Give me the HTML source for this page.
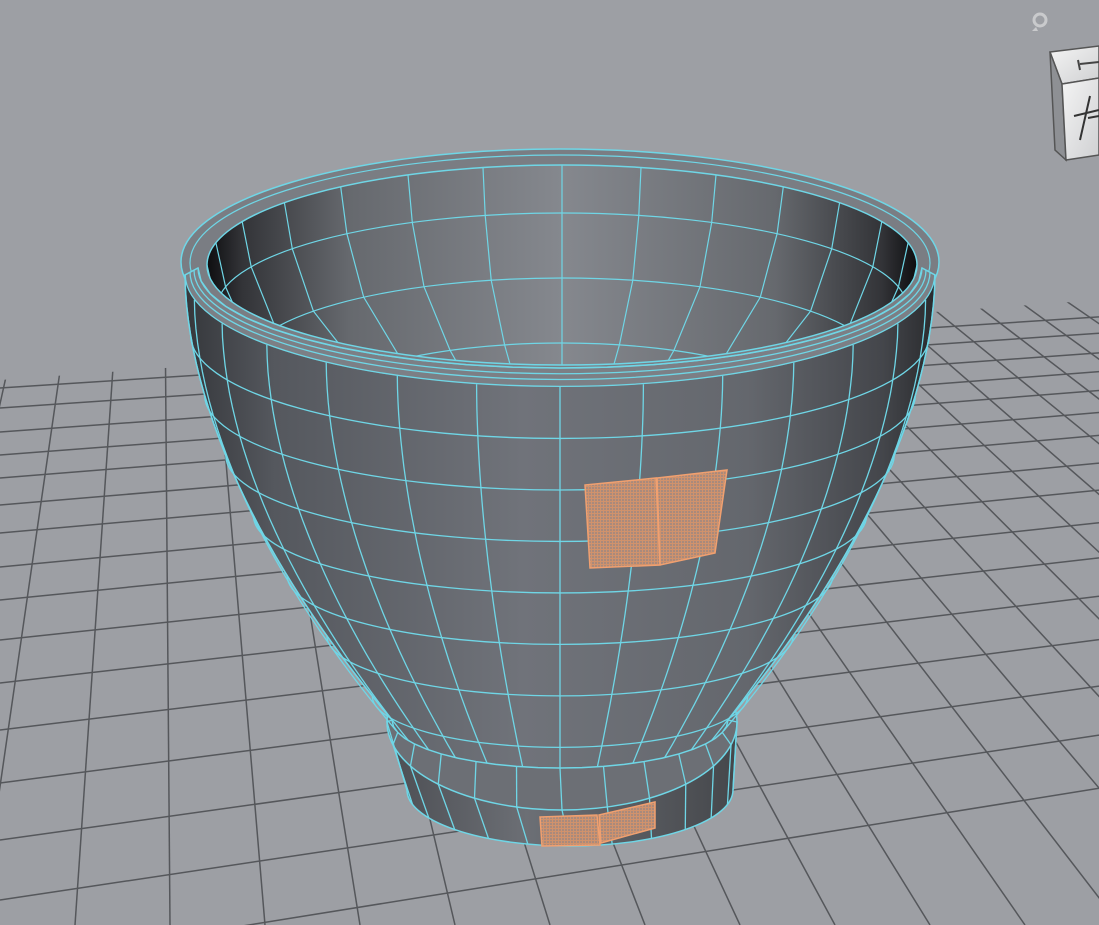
<!DOCTYPE html>
<html><head><meta charset="utf-8"><style>
html,body{margin:0;padding:0;background:#9d9fa4;overflow:hidden}
svg{display:block}
</style></head><body>
<svg id="s" width="1099" height="925" viewBox="0 0 1099 925" xmlns="http://www.w3.org/2000/svg">
<defs>
<linearGradient id="body" x1="0" x2="1" y1="0" y2="0">
<stop offset="0" stop-color="#35373b"/><stop offset="0.12" stop-color="#55585e"/>
<stop offset="0.45" stop-color="#70737a"/><stop offset="0.75" stop-color="#64676d"/>
<stop offset="0.93" stop-color="#44464b"/><stop offset="1" stop-color="#2a2b2e"/>
</linearGradient>
<linearGradient id="cav" x1="0" x2="1" y1="0" y2="0">
<stop offset="0" stop-color="#0e0e10"/><stop offset="0.05" stop-color="#333438"/>
<stop offset="0.2" stop-color="#66696e"/><stop offset="0.5" stop-color="#85888e"/>
<stop offset="0.8" stop-color="#66696e"/><stop offset="0.95" stop-color="#333438"/><stop offset="1" stop-color="#0e0e10"/>
</linearGradient>
<linearGradient id="foot" x1="0" x2="1">
<stop offset="0" stop-color="#4c4e53"/><stop offset="0.4" stop-color="#6c6f75"/><stop offset="1" stop-color="#45474b"/>
</linearGradient>
<linearGradient id="cube" x1="0" x2="1" y1="0" y2="1">
<stop offset="0" stop-color="#f4f4f4"/><stop offset="1" stop-color="#cfd0d2"/>
</linearGradient>
<pattern id="dots" width="3" height="3" patternUnits="userSpaceOnUse">
<rect width="3" height="3" fill="#a98a7c"/><rect width="1" height="3" fill="#d0926c"/><rect width="3" height="1" fill="#d0926c"/>
</pattern>
<clipPath id="ground"><polygon points="0,380 1099,300 1099,925 0,925"/></clipPath>
<clipPath id="inner"><ellipse cx="562" cy="265" rx="355" ry="100"/></clipPath>
</defs>
<rect width="1099" height="925" fill="#9d9fa4"/>
<g id="grid" clip-path="url(#ground)" stroke="#55575b" stroke-width="1.5" fill="none"></g>
<g id="bowl"></g>
<g>
<path d="M1050 52 L1099 46 L1099 78 L1062 84 Z" fill="url(#cube)" stroke="#555" stroke-width="1.5"/>
<path d="M1050 52 L1062 84 L1066 160 L1055 150 Z" fill="#8e9094" stroke="#555" stroke-width="1.5"/>
<path d="M1062 84 L1099 78 L1099 155 L1066 160 Z" fill="url(#cube)" stroke="#555" stroke-width="1.5"/>
<path d="M1078 60 L1080 70 M1080 64 L1099 62" stroke="#444" stroke-width="2" fill="none"/>
<path d="M1074 116 L1099 110 M1090 96 L1080 140 M1088 118 L1099 116" stroke="#333" stroke-width="2" fill="none"/>
<circle cx="1040" cy="20" r="6" fill="none" stroke="#c9cacc" stroke-width="3"/>
<path d="M1036 27 l-4 4 l6 0z" fill="#c9cacc"/>
</g>
</svg>
<script>
var NS="http://www.w3.org/2000/svg";
function el(p,t,a){var e=document.createElementNS(NS,t);for(var k in a)e.setAttribute(k,a[k]);p.appendChild(e);return e;}
var grid=document.getElementById('grid');
var VX=160,VY=-321;
for(var xb=-590;xb<=2800;xb+=95){el(grid,'line',{x1:xb,y1:925,x2:VX,y2:VY});}
var ys=[388,408,432,455,478,505,533,567,600,640,683,730,783,840,900,965];
ys.forEach(function(y){var s=-y/6000;el(grid,'line',{x1:0,y1:y,x2:1099,y2:y+s*1099});});
var g=document.getElementById('bowl');
var C="#6fd6e6";
function ring(t){var cy=275+445*t;return {cx:560,cy:cy,rx:375-207*Math.pow(t,1.8),ry:112-(112-48)*t};}
var FT={cx:562,cy:722,rx:175,ry:88},FB={cx:570,cy:790,rx:163,ry:56};
var fp="M"+(FT.cx-FT.rx)+" "+FT.cy+" L"+(FB.cx-FB.rx)+" "+FB.cy+" A"+FB.rx+" "+FB.ry+" 0 0 0 "+(FB.cx+FB.rx)+" "+FB.cy+" L"+(FT.cx+FT.rx)+" "+FT.cy+" Z";
el(g,'path',{d:fp,fill:"url(#foot)",stroke:C,"stroke-width":1.5});
el(g,'ellipse',{cx:FT.cx,cy:FT.cy,rx:FT.rx,ry:FT.ry,fill:"#6c6f75",stroke:C,"stroke-width":1.5});
var NF=12;
for(var i=0;i<=NF;i++){var a=Math.PI*i/NF;var c=Math.cos(a),s=Math.sin(a);
el(g,'line',{x1:FT.cx-FT.rx*c,y1:FT.cy+FT.ry*s,x2:FB.cx-FB.rx*c,y2:FB.cy+FB.ry*s,stroke:C,"stroke-width":1.3});
el(g,'line',{x1:FT.cx-FT.rx*c,y1:FT.cy+FT.ry*s,x2:560-168*c,y2:720+48*s,stroke:C,"stroke-width":1.3});}
el(g,'path',{d:"M540 817 L597 815 L600 845 L542 846 Z M599 815 L655 802 L655 828 L601 843 Z",fill:"url(#dots)",stroke:"#f0a070","stroke-width":1.5});
el(g,'ellipse',{cx:560,cy:262,rx:379,ry:113,fill:"#7a7d83",stroke:C,"stroke-width":1.5});
el(g,'ellipse',{cx:560,cy:263,rx:370,ry:108,fill:"none",stroke:C,"stroke-width":1.2});
el(g,'ellipse',{cx:562,cy:265,rx:355,ry:100,fill:"url(#cav)",stroke:C,"stroke-width":1.5});
var cg=el(g,'g',{"clip-path":"url(#inner)"});
var IR=[[265,355,100],[308,345,95],[366,318,88],[418,258,75],[460,180,55]];
for(var k=1;k<IR.length-1;k++){var r=IR[k];el(cg,'path',{d:"M"+(562-r[1])+" "+r[0]+" A"+r[1]+" "+r[2]+" 0 0 1 "+(562+r[1])+" "+r[0],fill:"none",stroke:C,"stroke-width":1.2});}
for(var i=0;i<=14;i++){var a=Math.PI*i/14;var d="";for(var k=0;k<IR.length;k++){var r=IR[k];d+=(k?"L":"M")+(562-r[1]*Math.cos(a)).toFixed(1)+" "+(r[0]-r[2]*Math.sin(a)).toFixed(1);}
el(cg,'path',{d:d,fill:"none",stroke:C,"stroke-width":1.2});}
var pts=[],N=30;
for(var j=0;j<=N;j++){var r=ring(j/N);pts.push((r.cx-r.rx)+","+r.cy);}
var rb=ring(1);for(var i=0;i<=24;i++){var a=Math.PI*i/24;pts.push((rb.cx-rb.rx*Math.cos(a))+","+(rb.cy+rb.ry*Math.sin(a)));}
for(var j=N;j>=0;j--){var r=ring(j/N);pts.push((r.cx+r.rx)+","+r.cy);}
for(var i=24;i>=0;i--){var a=Math.PI*i/24;pts.push((560-362*Math.cos(a))+","+(268+100*Math.sin(a)));}
el(g,'polygon',{points:pts.join(" "),fill:"url(#body)"});
el(g,'path',{d:"M198 268 A362 100 0 0 0 922 268 L935 275 A375 112 0 0 1 185 275 Z",fill:"#7c7f85"});
[0,5,10,16].forEach(function(d){el(g,'path',{d:"M"+(198-d*0.8)+" "+(268+d*0.4)+" A"+(362+d*0.8)+" "+(100+d*0.75)+" 0 0 0 "+(922+d*0.8)+" "+(268+d*0.4),fill:"none",stroke:C,"stroke-width":1.3});});
for(var k=1;k<=7;k++){var r=ring(k/7.4);el(g,'path',{d:"M"+(r.cx-r.rx)+" "+r.cy+" A"+r.rx+" "+r.ry+" 0 0 0 "+(r.cx+r.rx)+" "+r.cy,fill:"none",stroke:C,"stroke-width":1.3});}
for(var i=0;i<=14;i++){var a=Math.PI*i/14;var d="";
for(var j=0;j<=N;j++){var r=ring(j/N);var x=r.cx-r.rx*Math.cos(a),y=r.cy+r.ry*Math.sin(a);d+=(j?"L":"M")+x.toFixed(1)+" "+y.toFixed(1);}
el(g,'path',{d:d,fill:"none",stroke:C,"stroke-width":1.3});}
el(g,'polygon',{points:pts.join(" "),fill:"none",stroke:C,"stroke-width":1.5});
el(g,'path',{d:"M585 485 L656 478 L660 565 L590 568 Z M657 478 L727 470 L715 553 L660 565 Z",fill:"url(#dots)",stroke:"#f0a070","stroke-width":1.5});
</script>
</body></html>
